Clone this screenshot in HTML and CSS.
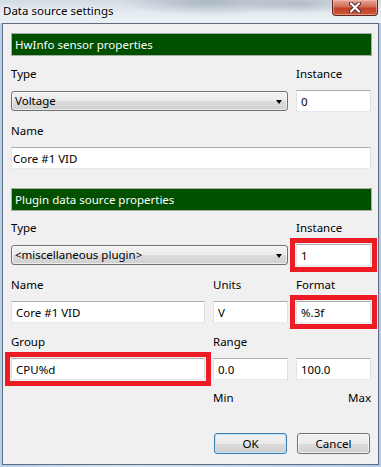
FILE: index.html
```html
<!DOCTYPE html>
<html lang="en">
<head>
  <meta charset="UTF-8">
  <meta name="viewport" content="width=device-width, initial-scale=1.0">
  <title>Data source settings</title>
  <link rel="stylesheet" href="styles.css">
</head>
<body>
  <div class="window">
    <div class="titlebar">
      <span class="title">Data source settings</span>
      <button class="close" title="Close">
        <svg width="14" height="11" viewBox="0 0 14 11">
          <path d="M3 1.5 L11 9.5 M11 1.5 L3 9.5" stroke="#4a2a26" stroke-width="4" stroke-linecap="round"/>
          <path d="M3 1.5 L11 9.5 M11 1.5 L3 9.5" stroke="#ffffff" stroke-width="2.2" stroke-linecap="round"/>
        </svg>
      </button>
    </div>

    <div class="client">
      <div class="section-head">HwInfo sensor properties</div>
      <div class="form">
        <div class="field span2">
          <label>Type</label>
          <div class="select">Voltage<span class="arrow"></span></div>
        </div>
        <div class="field">
          <label>Instance</label>
          <input class="text" type="text" value="0">
        </div>
        <div class="field span3">
          <label>Name</label>
          <input class="text tight" type="text" value="Core #1 VID">
        </div>
      </div>

      <div class="section-head second">Plugin data source properties</div>
      <div class="form">
        <div class="field span2">
          <label>Type</label>
          <div class="select">&lt;miscellaneous plugin&gt;<span class="arrow"></span></div>
        </div>
        <div class="field">
          <label>Instance</label>
          <input class="text marked" type="text" value="1">
        </div>
        <div class="field">
          <label>Name</label>
          <input class="text" type="text" value="Core #1 VID">
        </div>
        <div class="field">
          <label>Units</label>
          <input class="text" type="text" value="V">
        </div>
        <div class="field">
          <label>Format</label>
          <input class="text marked" type="text" value="%.3f">
        </div>
        <div class="field">
          <label>Group</label>
          <input class="text marked" type="text" value="CPU%d">
        </div>
        <div class="field">
          <label>Range</label>
          <input class="text" type="text" value="0.0">
        </div>
        <div class="field">
          <label>&nbsp;</label>
          <input class="text" type="text" value="100.0">
        </div>
        <div class="range-labels">
          <span>Min</span>
          <span>Max</span>
        </div>
      </div>

      <div class="buttons">
        <button class="btn default">OK</button>
        <button class="btn">Cancel</button>
      </div>
    </div>
  </div>
</body>
</html>
```

FILE: styles.css
```css
* {
  margin: 0;
  padding: 0;
  box-sizing: border-box;
  font-family: 'Segoe UI', 'Noto Sans', sans-serif;
}
body {
  background: #c9dbee;
  width: 381px;
  height: 467px;
  overflow: hidden;
}
.window {
  width: 381px;
  height: 467px;
  display: flex;
  flex-direction: column;
  background: linear-gradient(to right, #b7cfe9, #d6e3f1 30%, #c2d6ec 70%, #b3cbe6);
}
.titlebar {
  height: 23px;
  display: flex;
  align-items: flex-start;
  padding-left: 3px;
  background:
    radial-gradient(ellipse 90px 14px at 210px 2px, rgba(120,135,150,0.45), transparent),
    radial-gradient(ellipse 60px 10px at 300px 4px, rgba(110,125,140,0.35), transparent),
    linear-gradient(#d3dbe3, #e6ecf2 60%, #e9eff5);
}
.title {
  font-size: 11.5px;
  line-height: 15px;
  padding-top: 3px;
  color: #000;
  text-shadow: 0 0 6px #fff, 0 0 3px #fff;
}
.close {
  margin-left: auto;
  margin-right: 3px;
  width: 46px;
  height: 16px;
  border: 1px solid #5a2b22;
  border-top: none;
  border-radius: 0 0 4px 4px;
  background: linear-gradient(#e8a795, #d26b55 45%, #c23f27 55%, #cf5a3e);
  box-shadow: inset 0 0 0 1px rgba(255,200,190,0.5);
  display: flex;
  justify-content: center;
  align-items: center;
}
.client {
  flex: 1;
  margin: 0 2px 2px 2px;
  border: 1px solid #5f6c7d;
  background: #f0f0f0;
  padding: 9px 6px 0 8px;
}
.section-head {
  height: 23px;
  line-height: 21px;
  padding-left: 3px;
  background: #005000;
  border: 1px solid #a7aea7;
  color: #fff;
  font-size: 11.5px;
}
.form {
  display: grid;
  grid-template-columns: 194px 75px 75px;
  column-gap: 8px;
  row-gap: 11px;
  margin-top: 10px;
}
.form + .section-head {
  margin-top: 19px;
}
.section-head.second + .form {
  margin-top: 9px;
}
.field {
  display: flex;
  flex-direction: column;
}
.span2 {
  grid-column: span 2;
}
.span3 {
  grid-column: span 3;
}
label {
  font-size: 11.5px;
  line-height: 15px;
  margin-bottom: 9px;
  color: #000;
}
.text {
  height: 22px;
  font-size: 11.5px;
  padding: 0 4px;
  background: #fff;
  border: 1px solid;
  border-color: #abadb3 #dbdfe6 #e3e9ef #e2e3ea;
  color: #000;
  outline: none;
}
.text.tight {
  padding: 0 1px;
}
.text.marked {
  outline: 5px solid #ed1c24;
  outline-offset: 1px;
}
.select {
  height: 20px;
  margin-top: 1px;
  position: relative;
  font-size: 11.5px;
  line-height: 18px;
  padding-left: 3px;
  border: 1px solid #707070;
  border-radius: 3px;
  background: linear-gradient(#f2f2f2, #ebebeb 50%, #dddddd 50%, #cfcfcf);
  box-shadow: inset 0 0 0 1px rgba(255,255,255,0.6);
}
.arrow {
  position: absolute;
  right: 5px;
  top: 8px;
  border-left: 3.5px solid transparent;
  border-right: 3.5px solid transparent;
  border-top: 4px solid #000;
}
.range-labels {
  grid-column: 2 / span 2;
  display: flex;
  justify-content: space-between;
  font-size: 11.5px;
  line-height: 15px;
  margin-top: -1px;
}
.buttons {
  display: flex;
  justify-content: flex-end;
  gap: 10px;
  margin-top: 28px;
  padding-right: 2px;
}
.btn {
  width: 73px;
  height: 21px;
  font-size: 11.5px;
  border: 1px solid #707070;
  border-radius: 3px;
  background: linear-gradient(#f2f2f2, #ebebeb 50%, #dddddd 50%, #cfcfcf);
  box-shadow: inset 0 0 0 1px rgba(255,255,255,0.7);
  color: #000;
}
.btn.default {
  border-color: #3c7fb1;
  box-shadow: inset 0 0 0 1px #bde3f7;
}
```
